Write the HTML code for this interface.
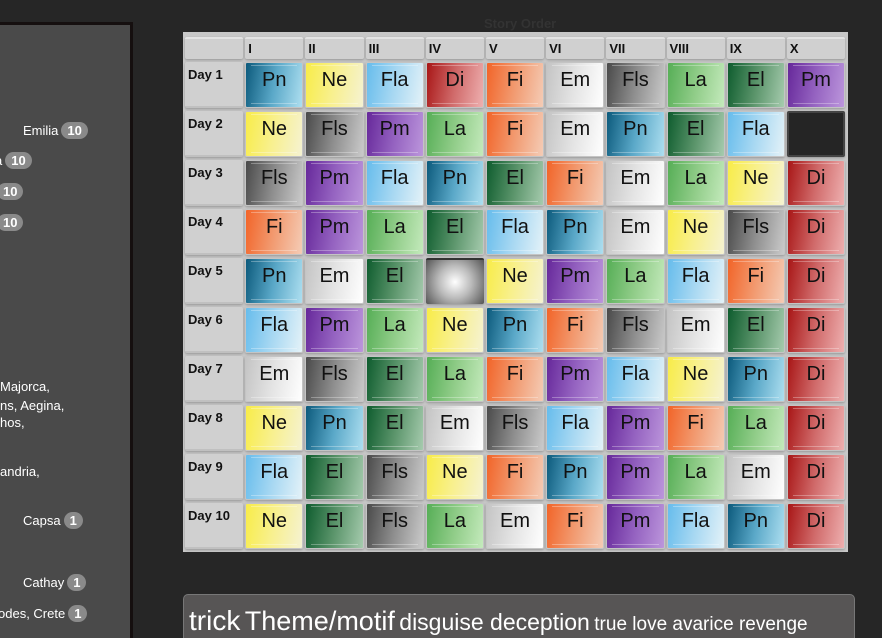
<!DOCTYPE html>
<html><head><meta charset="utf-8"><style>
html,body{margin:0;width:882px;height:638px;overflow:hidden}
body{background:#262626;font-family:"Liberation Sans",sans-serif;position:relative}
#panel{position:absolute;left:0;top:22px;width:130px;height:616px;background:#4a4a4a;border-top:3px solid #150f0f;border-right:3px solid #150f0f}
.t{position:absolute;color:#fff;font-size:13px;white-space:nowrap}
.b{display:inline-block;background:#8a8a8a;color:#fff;font-weight:bold;border-radius:9px;padding:1px 6px;font-size:13px;margin-left:3px}
#title{position:absolute;left:484px;top:16px;font-size:13px;font-weight:bold;color:#333}
#tbl{position:absolute;left:183px;top:32px;width:665px;height:520px;background:#c8c8c8}
#g{position:absolute;left:2px;top:5px;display:grid;grid-template-columns:repeat(11,58.2px);grid-template-rows:22px repeat(10,46px);column-gap:2px;row-gap:3px}
#g div{border-radius:2px;position:relative;box-shadow:0 1px 2px rgba(0,0,0,.25)}
.h{background:#d0d0d0;font-weight:bold;font-size:13px;color:#111;padding:2px 0 0 3px;box-sizing:border-box;border-top:2px solid #e4e4e4}
.d{background:#d0d0d0;font-weight:bold;font-size:13px;color:#111;padding:5px 0 0 3px;box-sizing:border-box;border-bottom:2px solid #c0c0c0}
.c{font-size:20px;text-align:center;line-height:30px;padding-top:2px;color:#111;border:1px solid #c4c4c4;box-sizing:border-box;background-clip:padding-box}
.c::before,.c::after{content:"";position:absolute;left:5px;right:5px;height:1px;background:rgba(255,255,255,.3)}
.c::before{top:2px}.c::after{bottom:3px}
.Pn{background:linear-gradient(100deg,#0c5a7c,#5aa8c8 50%,#aedff0)}
.Ne{background:linear-gradient(100deg,#f8ec48,#f8f090 50%,#f5f2d2)}
.Fla{background:linear-gradient(100deg,#66bcec,#a8d8f2 50%,#e4f2f8)}
.Di{background:linear-gradient(100deg,#a81616,#d06a6a 50%,#eeb0b0)}
.Fi{background:linear-gradient(100deg,#f26428,#f29a70 50%,#f4ccb6)}
.Em{background:linear-gradient(100deg,#c4c4c4,#e4e4e4 50%,#fff)}
.Fls{background:linear-gradient(100deg,#4a4a4a,#8e8e8e 50%,#cacaca)}
.La{background:linear-gradient(100deg,#56ae56,#90cc88 50%,#c4eabc)}
.El{background:linear-gradient(100deg,#0e5c2e,#5a946a 50%,#a6cbae)}
.Pm{background:linear-gradient(100deg,#66289a,#9462c0 50%,#bc96dc)}
.X{background:#252525;border:2px solid #444}
.Gr{background:radial-gradient(circle at 50% 50%,#fff,#bbb 45%,#555);border-top:2px solid #333}
#box{position:absolute;left:183px;top:594px;width:670px;height:60px;background:#575555;border:1px solid #777;border-radius:5px;color:#fff;white-space:nowrap}
</style></head><body>
<div id="panel"></div>
<div class="t" style="left:23px;top:122px">Emilia<span class="b">10</span></div>
<div class="t" style="left:-5px;top:152px">a<span class="b">10</span></div>
<div class="t" style="left:-6px;top:183px"><span class="b">10</span></div>
<div class="t" style="left:-6px;top:214px"><span class="b">10</span></div>
<div class="t" style="left:0;top:379px">Majorca,</div>
<div class="t" style="left:0;top:398px">ns, Aegina,</div>
<div class="t" style="left:0;top:415px">hos,</div>
<div class="t" style="left:0;top:464px">andria,</div>
<div class="t" style="left:23px;top:512px">Capsa<span class="b">1</span></div>
<div class="t" style="left:23px;top:574px">Cathay<span class="b">1</span></div>
<div class="t" style="left:-2px;top:605px">odes, Crete<span class="b">1</span></div>
<div id="title">Story Order</div>
<div id="tbl"><div id="g">
<div class="h"></div><div class="h">I</div><div class="h">II</div><div class="h">III</div><div class="h">IV</div><div class="h">V</div><div class="h">VI</div><div class="h">VII</div><div class="h">VIII</div><div class="h">IX</div><div class="h">X</div>
<div class="d">Day 1</div><div class="c Pn">Pn</div><div class="c Ne">Ne</div><div class="c Fla">Fla</div><div class="c Di">Di</div><div class="c Fi">Fi</div><div class="c Em">Em</div><div class="c Fls">Fls</div><div class="c La">La</div><div class="c El">El</div><div class="c Pm">Pm</div>
<div class="d">Day 2</div><div class="c Ne">Ne</div><div class="c Fls">Fls</div><div class="c Pm">Pm</div><div class="c La">La</div><div class="c Fi">Fi</div><div class="c Em">Em</div><div class="c Pn">Pn</div><div class="c El">El</div><div class="c Fla">Fla</div><div class="X"></div>
<div class="d">Day 3</div><div class="c Fls">Fls</div><div class="c Pm">Pm</div><div class="c Fla">Fla</div><div class="c Pn">Pn</div><div class="c El">El</div><div class="c Fi">Fi</div><div class="c Em">Em</div><div class="c La">La</div><div class="c Ne">Ne</div><div class="c Di">Di</div>
<div class="d">Day 4</div><div class="c Fi">Fi</div><div class="c Pm">Pm</div><div class="c La">La</div><div class="c El">El</div><div class="c Fla">Fla</div><div class="c Pn">Pn</div><div class="c Em">Em</div><div class="c Ne">Ne</div><div class="c Fls">Fls</div><div class="c Di">Di</div>
<div class="d">Day 5</div><div class="c Pn">Pn</div><div class="c Em">Em</div><div class="c El">El</div><div class="Gr"></div><div class="c Ne">Ne</div><div class="c Pm">Pm</div><div class="c La">La</div><div class="c Fla">Fla</div><div class="c Fi">Fi</div><div class="c Di">Di</div>
<div class="d">Day 6</div><div class="c Fla">Fla</div><div class="c Pm">Pm</div><div class="c La">La</div><div class="c Ne">Ne</div><div class="c Pn">Pn</div><div class="c Fi">Fi</div><div class="c Fls">Fls</div><div class="c Em">Em</div><div class="c El">El</div><div class="c Di">Di</div>
<div class="d">Day 7</div><div class="c Em">Em</div><div class="c Fls">Fls</div><div class="c El">El</div><div class="c La">La</div><div class="c Fi">Fi</div><div class="c Pm">Pm</div><div class="c Fla">Fla</div><div class="c Ne">Ne</div><div class="c Pn">Pn</div><div class="c Di">Di</div>
<div class="d">Day 8</div><div class="c Ne">Ne</div><div class="c Pn">Pn</div><div class="c El">El</div><div class="c Em">Em</div><div class="c Fls">Fls</div><div class="c Fla">Fla</div><div class="c Pm">Pm</div><div class="c Fi">Fi</div><div class="c La">La</div><div class="c Di">Di</div>
<div class="d">Day 9</div><div class="c Fla">Fla</div><div class="c El">El</div><div class="c Fls">Fls</div><div class="c Ne">Ne</div><div class="c Fi">Fi</div><div class="c Pn">Pn</div><div class="c Pm">Pm</div><div class="c La">La</div><div class="c Em">Em</div><div class="c Di">Di</div>
<div class="d">Day 10</div><div class="c Ne">Ne</div><div class="c El">El</div><div class="c Fls">Fls</div><div class="c La">La</div><div class="c Em">Em</div><div class="c Fi">Fi</div><div class="c Pm">Pm</div><div class="c Fla">Fla</div><div class="c Pn">Pn</div><div class="c Di">Di</div>
</div></div>
<div id="box"><div style="position:absolute;left:5px;top:10px"><span style="font-size:28px">trick</span> <span style="font-size:27px">Theme/motif</span> <span style="font-size:23px">disguise deception</span> <span style="font-size:19px">true love avarice revenge</span></div></div>
</body></html>
